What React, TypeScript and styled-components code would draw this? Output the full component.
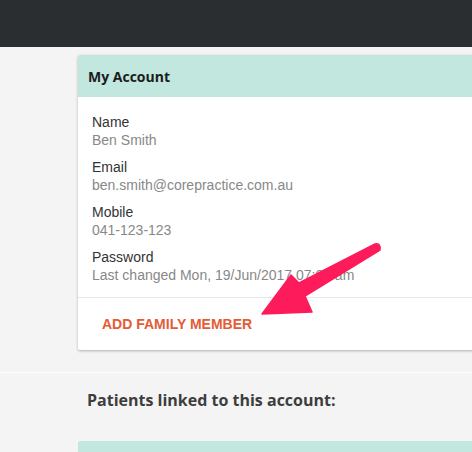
import React, { FC } from "react";
import styled, { createGlobalStyle } from "styled-components";

const GlobalStyle = createGlobalStyle`
  body {
    margin: 0;
    background: #f4f4f4;
    overflow: hidden;
    font-family: "Liberation Sans", Arial, sans-serif;
  }
`;

const Page = styled.div`
  position: relative;
  width: 472px;
  height: 452px;
  overflow: hidden;
  background: #f4f4f4;
`;

const TopBar = styled.div`
  height: 47px;
  background: #2b2e30;
`;

const Content = styled.div`
  padding: 8px 0 0 78px;
`;

const Card = styled.div`
  width: 520px;
  background: #fff;
  border-radius: 2px 0 0 2px;
  box-shadow: 0 1px 3px rgba(0, 0, 0, 0.28);
`;

const CardHeader = styled.div`
  height: 42px;
  display: flex;
  align-items: center;
  padding: 0 10px;
  background: #c1e7df;
  border-radius: 2px 0 0 0;
  font-family: "Open Sans", sans-serif;
  font-weight: 700;
  font-size: 14px;
  color: #1c1c1c;
`;

const CardBody = styled.div`
  padding: 16px 14px 13px;
  display: flex;
  flex-direction: column;
  gap: 9px;
`;

const Field = styled.div`
  display: flex;
  flex-direction: column;
`;

const Label = styled.span`
  font-size: 14px;
  line-height: 18px;
  color: #333;
`;

const Value = styled.span`
  font-size: 14px;
  line-height: 18px;
  color: #888;
`;

const CardFooter = styled.div`
  border-top: 1px solid #e6e6e6;
  height: 52px;
  display: flex;
  align-items: center;
  padding: 0 16px;
`;

const TextButton = styled.button`
  border: 0;
  background: none;
  padding: 6px 8px;
  font-family: "Liberation Sans", Arial, sans-serif;
  font-weight: 700;
  font-size: 14px;
  color: #e35c35;
  text-transform: uppercase;
  cursor: pointer;
`;

const Section = styled.div`
  margin-top: 22px;
  border-top: 1px solid #fff;
  padding: 17px 0 0 87px;
`;

const SectionTitle = styled.h3`
  margin: 0 0 31px;
  font-family: "Open Sans", sans-serif;
  font-weight: 700;
  font-size: 16px;
  line-height: 20px;
  color: #3d3d3d;
`;

const NextCard = styled.div`
  margin-left: 78px;
  height: 60px;
  background: #c1e7df;
  border-radius: 2px 0 0 0;
`;

const Pointer = styled.svg`
  position: absolute;
  left: 0;
  top: 0;
  pointer-events: none;
`;

const fields = [
  { label: "Name", value: "Ben Smith" },
  { label: "Email", value: "ben.smith@corepractice.com.au" },
  { label: "Mobile", value: "041-123-123" },
  { label: "Password", value: "Last changed Mon, 19/Jun/2017 07:09 am" },
];

const App: FC = () => {
  return (
    <Page>
      <GlobalStyle />
      <TopBar />
      <Content>
        <Card>
          <CardHeader>My Account</CardHeader>
          <CardBody>
            {fields.map((f) => (
              <Field key={f.label}>
                <Label>{f.label}</Label>
                <Value>{f.value}</Value>
              </Field>
            ))}
          </CardBody>
          <CardFooter>
            <TextButton>Add family member</TextButton>
          </CardFooter>
        </Card>
      </Content>
      <Section>
        <SectionTitle>Patients linked to this account:</SectionTitle>
      </Section>
      <NextCard />
      {/* pink callout arrow pointing at the add button */}
      <Pointer width="472" height="452" viewBox="0 0 472 452">
        <path
          d="M262 314 L291 275 L299 283 L375 244 Q381 243 380 250 L305 296 L312 312 Z"
          fill="#fd1b5b"
          stroke="#fd1b5b"
          strokeWidth="1.5"
          strokeLinejoin="round"
        />
      </Pointer>
    </Page>
  );
};

export default App;
